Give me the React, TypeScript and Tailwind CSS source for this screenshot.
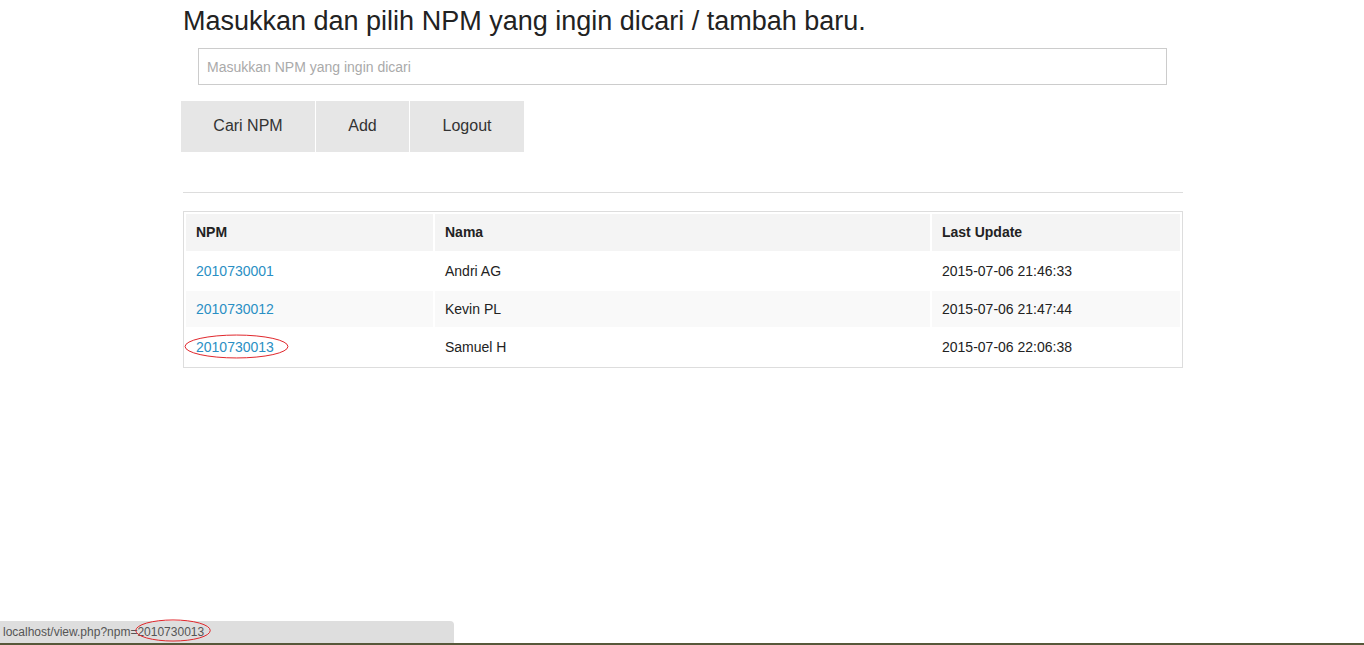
const rows = [
  { npm: "2010730001", nama: "Andri AG", updated: "2015-07-06 21:46:33" },
  { npm: "2010730012", nama: "Kevin PL", updated: "2015-07-06 21:47:44" },
  { npm: "2010730013", nama: "Samuel H", updated: "2015-07-06 22:06:38" },
];

function RedOval({ className }: { className: string }) {
  return (
    <svg className={`pointer-events-none absolute ${className}`} viewBox="0 0 100 24" preserveAspectRatio="none">
      <ellipse cx="50" cy="12" rx="49" ry="11" fill="none" stroke="#e0262b" strokeWidth="1" vectorEffect="non-scaling-stroke" />
    </svg>
  );
}

export default function App() {
  return (
    <div className="relative h-[645px] overflow-hidden bg-white font-['Liberation_Sans',Arial,sans-serif] text-[#333]">
      <div className="ml-[183px] w-[1000px] pt-[3px]">
        <h1 className="text-[27px] leading-[36px] text-[#222]">
          Masukkan dan pilih NPM yang ingin dicari / tambah baru.
        </h1>

        <div className="mt-[9px] pl-[15px] pr-[16px]">
          <input
            type="text"
            placeholder="Masukkan NPM yang ingin dicari"
            className="h-[37px] w-full border border-[#ccc] px-[8px] text-[14px] text-[#333] placeholder:text-[#aaa] outline-none"
          />
        </div>

        <div className="ml-[-2px] mt-[16px] flex gap-[1px]">
          <button className="h-[51px] w-[134px] bg-[#e6e6e6] pb-[2px] text-[16px] text-[#333]">Cari NPM</button>
          <button className="h-[51px] w-[93px] bg-[#e6e6e6] pb-[2px] text-[16px] text-[#333]">Add</button>
          <button className="h-[51px] w-[114px] bg-[#e6e6e6] pb-[2px] text-[16px] text-[#333]">Logout</button>
        </div>

        <hr className="mt-[40px] border-0 border-t border-[#ddd]" />

        <div className="relative mt-[18px]">
          <table className="w-full border border-[#ddd] border-separate border-spacing-[2px] text-left text-[14px]">
            <thead>
              <tr className="bg-[#f4f4f4]">
                <th className="h-[37px] w-[247px] px-[10px] font-bold text-[#222]">NPM</th>
                <th className="h-[37px] w-[495px] px-[10px] font-bold text-[#222]">Nama</th>
                <th className="h-[37px] px-[10px] font-bold text-[#222]">Last Update</th>
              </tr>
            </thead>
            <tbody>
              {rows.map((r, i) => (
                <tr key={r.npm} className={i === 1 ? "bg-[#f9f9f9]" : "bg-white"}>
                  <td className="h-[36px] px-[10px]">
                    <a href="#" className="text-[#2a8fc4]">{r.npm}</a>
                  </td>
                  <td className="h-[36px] px-[10px] text-[#222]">{r.nama}</td>
                  <td className="h-[36px] px-[10px] text-[#222]">{r.updated}</td>
                </tr>
              ))}
            </tbody>
          </table>
          <RedOval className="left-[1px] top-[123px] h-[25px] w-[105px]" />
        </div>
      </div>

      <div className="absolute bottom-[2px] left-0 h-[22px] w-[454px] rounded-tr-[4px] bg-[#dedede] pl-[3px] text-[12px] leading-[22px] text-[#555]">
        localhost/view.php?npm=2010730013
        <RedOval className="left-[135px] top-[-2px] h-[23px] w-[76px]" />
      </div>
      <div className="absolute bottom-0 left-0 h-[2px] w-full bg-[#57583a]" />
    </div>
  );
}
